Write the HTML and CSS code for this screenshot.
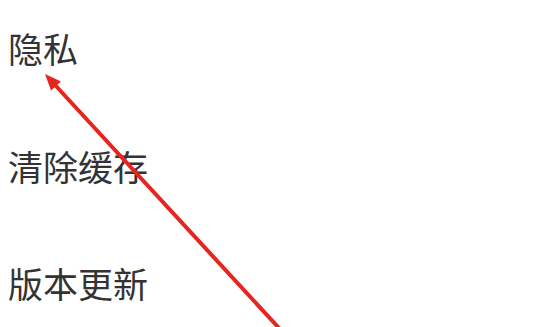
FILE: index.html
```html
<!DOCTYPE html>
<html lang="zh">
<head>
<meta charset="utf-8">
<link rel="stylesheet" href="styles.css">
</head>
<body>
<ul class="menu">
  <li class="item">隐私</li>
  <li class="item">清除缓存</li>
  <li class="item">版本更新</li>
</ul>
<svg class="arrow" width="550" height="327" viewBox="0 0 550 327">
  <line x1="55.5" y1="85.5" x2="290" y2="340" stroke="#e8241e" stroke-width="4" stroke-linecap="round"/>
  <polygon points="45,74 51,90.5 61,81.5" fill="#e8241e"/>
</svg>
</body>
</html>
```
FILE: styles.css
```css
html, body {
  margin: 0;
  padding: 0;
  background: #ffffff;
  width: 550px;
  height: 327px;
  overflow: hidden;
  position: relative;
}
.menu {
  list-style: none;
  margin: 0;
  padding: 30px 0 0 8px;
  display: flex;
  flex-direction: column;
  gap: 82.5px;
}
.item {
  font-family: "Noto Sans CJK SC", "Noto Sans", sans-serif;
  font-size: 35px;
  line-height: 35px;
  height: 35px;
  color: #333333;
  white-space: nowrap;
}
.arrow {
  position: absolute;
  left: 0;
  top: 0;
}
```
